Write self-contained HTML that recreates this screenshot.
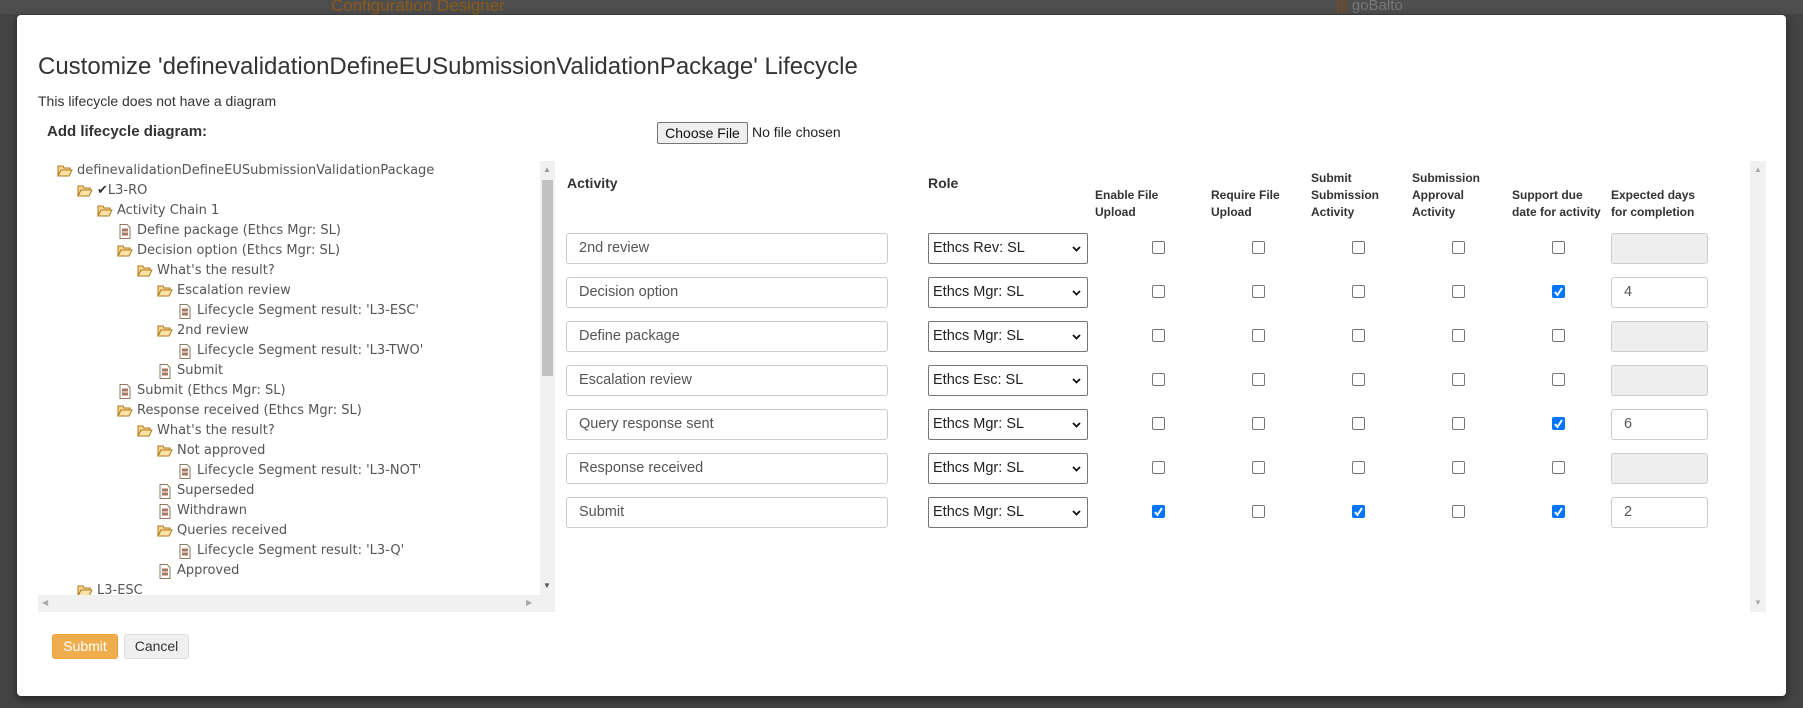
<!DOCTYPE html>
<html><head><meta charset="utf-8"><style>
*{box-sizing:border-box;margin:0;padding:0}
body{width:1803px;height:708px;overflow:hidden;background:#444;font-family:"Liberation Sans",Arial,sans-serif;position:relative}
.abs{position:absolute}
.modal{position:absolute;left:17px;top:15px;width:1769px;height:681px;background:#fff;border-radius:4px;box-shadow:0 3px 9px rgba(0,0,0,.5)}
.tree{position:absolute;left:38px;top:161px;width:517px;height:434px;overflow:hidden;font-family:"DejaVu Sans",Verdana,sans-serif;font-size:13px;color:#555}
.row{position:absolute;height:20px;line-height:20px;white-space:nowrap}
.row svg{position:absolute;left:0;top:3px}
.row span{position:absolute;left:20px}
.inp{position:absolute;height:31px;border:1px solid #ccc;border-radius:3px;background:#fff;font-size:14.5px;color:#555;line-height:29px;padding-left:12px}
.sel{position:absolute;height:31px;border:1px solid #767676;border-radius:2px;background:#fff;font-size:14.5px;color:#222;line-height:29px;padding-left:4px;width:160px}
.sel svg{position:absolute;right:6px;top:12px}
.cb{position:absolute;width:13px;height:13px;border:1px solid #767676;border-radius:2px;background:#fff}
.cb.on{background:#0075ff;border-color:#0075ff}
.hd{position:absolute;font-size:12px;font-weight:bold;color:#333;line-height:17px}
</style></head><body>
<div class="abs" style="left:0;top:0;width:1803px;height:14px;background:#4e4e4e"></div>
<div class="abs" style="left:331px;top:-4px;color:#8a5a1a;font-size:17px">Configuration Designer</div>
<div class="abs" style="left:1336px;top:-3px;color:#777;font-size:15px"><span style="color:#8a4a10">|||</span> goBalto</div>
<div class="modal"></div>
<div class="abs" style="left:38px;top:53px;font-size:24px;color:#333">Customize 'definevalidationDefineEUSubmissionValidationPackage' Lifecycle</div>
<div class="abs" style="left:38px;top:93px;font-size:14px;color:#333">This lifecycle does not have a diagram</div>
<div class="abs" style="left:47px;top:123px;font-size:15px;font-weight:bold;color:#333">Add lifecycle diagram:</div>
<div class="abs" style="left:657px;top:122px;width:91px;height:22px;border:1px solid #767676;border-radius:2px;background:#efefef;font-size:14px;line-height:20px;text-align:center;color:#111">Choose File</div>
<div class="abs" style="left:752px;top:124px;font-size:14px;color:#222">No file chosen</div>

<div class="tree" id="tree"></div>
<div class="abs" style="left:540px;top:161px;width:15px;height:434px;background:#f1f1f1"></div>
<div class="abs" style="left:542px;top:180px;width:11px;height:196px;background:#c1c1c1"></div>
<div class="abs" style="left:543px;top:165px;font-size:8px;color:#999">▲</div>
<div class="abs" style="left:543px;top:581px;font-size:8px;color:#555">▼</div>
<div class="abs" style="left:38px;top:595px;width:517px;height:17px;background:#f1f1f1"></div>
<div class="abs" style="left:42px;top:598px;font-size:8px;color:#aaa">◀</div>
<div class="abs" style="left:526px;top:598px;font-size:8px;color:#aaa">▶</div>

<div class="abs" style="left:1750px;top:161px;width:16px;height:451px;background:#f1f1f1"></div>
<div class="abs" style="left:1754px;top:165px;font-size:8px;color:#aaa">▲</div>
<div class="abs" style="left:1754px;top:598px;font-size:8px;color:#aaa">▼</div>

<div class="hd" style="left:567px;top:175px;font-size:14px">Activity</div>
<div class="hd" style="left:928px;top:175px;font-size:14px">Role</div>
<div class="hd" style="left:1095px;top:187px">Enable File<br>Upload</div>
<div class="hd" style="left:1211px;top:187px">Require File<br>Upload</div>
<div class="hd" style="left:1311px;top:170px">Submit<br>Submission<br>Activity</div>
<div class="hd" style="left:1412px;top:170px">Submission<br>Approval<br>Activity</div>
<div class="hd" style="left:1512px;top:187px">Support due<br>date for activity</div>
<div class="hd" style="left:1611px;top:187px">Expected days<br>for completion</div>
<div id="rows"></div>

<div class="abs" style="left:52px;top:634px;width:66px;height:25px;background:#f0ad4e;border:1px solid #eea236;border-radius:3px;color:#fff;font-size:14px;line-height:23px;text-align:center">Submit</div>
<div class="abs" style="left:124px;top:634px;width:65px;height:25px;background:#f0f0f0;border:1px solid #ddd;border-radius:3px;color:#333;font-size:14px;line-height:23px;text-align:center">Cancel</div>

<script>
var F='<svg width="16" height="14" viewBox="0 0 16 14"><path d="M1 2h5l1 2h6v2H4L1 12z" fill="#f8d890" stroke="#b07818"/><path d="M1 12l3-6h11l-3 6z" fill="#fbe3a8" stroke="#b07818"/></svg>';
var D='<svg width="16" height="15" viewBox="0 0 16 15"><path d="M3 .5h7l3 3v11H3z" fill="#fff" stroke="#8a7a60"/><path d="M5 5h6M5 7h6M5 9h6M5 11h6" stroke="#d06060"/><path d="M5 6h6M5 10h6" stroke="#60a060"/></svg>';
var t=[[0,F,'definevalidationDefineEUSubmissionValidationPackage'],[1,F,'<b style="font-weight:normal;color:#333">&#10004;</b>L3-RO'],[2,F,'Activity Chain 1'],[3,D,'Define package (Ethcs Mgr: SL)'],[3,F,'Decision option (Ethcs Mgr: SL)'],[4,F,"What's the result?"],[5,F,'Escalation review'],[6,D,"Lifecycle Segment result: 'L3-ESC'"],[5,F,'2nd review'],[6,D,"Lifecycle Segment result: 'L3-TWO'"],[5,D,'Submit'],[3,D,'Submit (Ethcs Mgr: SL)'],[3,F,'Response received (Ethcs Mgr: SL)'],[4,F,"What's the result?"],[5,F,'Not approved'],[6,D,"Lifecycle Segment result: 'L3-NOT'"],[5,D,'Superseded'],[5,D,'Withdrawn'],[5,F,'Queries received'],[6,D,"Lifecycle Segment result: 'L3-Q'"],[5,D,'Approved'],[1,F,'L3-ESC']];
var h='';t.forEach(function(r,i){h+='<div class="row" style="left:'+(19+20*r[0])+'px;top:'+(i*20)+'px">'+r[1]+'<span>'+r[2]+'</span></div>';});
document.getElementById('tree').innerHTML=h;
var R=[['2nd review','Ethcs Rev: SL',[0,0,0,0,0],null],['Decision option','Ethcs Mgr: SL',[0,0,0,0,1],'4'],['Define package','Ethcs Mgr: SL',[0,0,0,0,0],null],['Escalation review','Ethcs Esc: SL',[0,0,0,0,0],null],['Query response sent','Ethcs Mgr: SL',[0,0,0,0,1],'6'],['Response received','Ethcs Mgr: SL',[0,0,0,0,0],null],['Submit','Ethcs Mgr: SL',[1,0,1,0,1],'2']];
var cx=[1159,1259,1359,1459,1559];h='';
R.forEach(function(r,i){var y=233+i*44;
h+='<div class="inp" style="left:566px;top:'+y+'px;width:322px">'+r[0]+'</div>';
h+='<div class="sel" style="left:928px;top:'+y+'px">'+r[1]+'<svg width="9" height="6"><path d="M1 1l3.5 3.5L8 1" stroke="#111" stroke-width="1.8" fill="none"/></svg></div>';
r[2].forEach(function(c,j){h+='<div class="cb'+(c?' on':'')+'" style="left:'+(cx[j]-7)+'px;top:'+(y+8)+'px">'+(c?'<svg width="11" height="11" style="position:absolute;left:0;top:0"><path d="M2 6l2.5 3L9 2" stroke="#fff" stroke-width="2" fill="none"/></svg>':'')+'</div>';});
h+='<div class="inp" style="left:1611px;top:'+y+'px;width:97px;'+(r[3]?'':'background:#eee')+'">'+(r[3]||'')+'</div>';});
document.getElementById('rows').innerHTML=h;
</script>
</body></html>
